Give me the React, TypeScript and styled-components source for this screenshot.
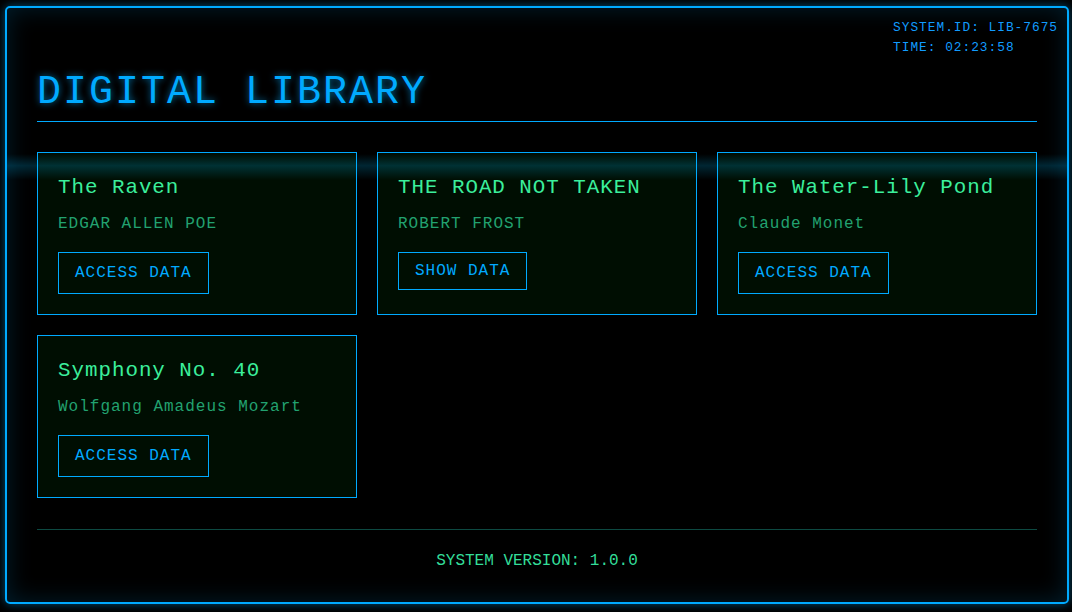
import React from "react";
import styled, { createGlobalStyle } from "styled-components";

const MONO = `"Liberation Mono", "Courier New", monospace`;

const GlobalStyle = createGlobalStyle`
  html, body {
    margin: 0;
    padding: 0;
    background: #000;
  }
  body {
    font-family: ${MONO};
    color: #00aaff;
  }
  * { box-sizing: border-box; }
`;

const Page = styled.div`
  padding: 6px 3px 8px 5px;
  height: 612px;
`;

const Frame = styled.div`
  position: relative;
  height: 598px;
  border: 2px solid #00aaff;
  border-radius: 5px;
  padding: 30px;
  overflow: hidden;
  box-shadow: 0 0 10px rgba(0, 170, 255, 0.45),
    inset 0 0 24px rgba(0, 170, 255, 0.18);
`;

const ScanLine = styled.div`
  position: absolute;
  left: 0;
  right: 0;
  top: 146px;
  height: 26px;
  pointer-events: none;
  z-index: 2;
  background: linear-gradient(
    to bottom,
    rgba(0, 170, 255, 0) 0%,
    rgba(0, 190, 255, 0.2) 45%,
    rgba(0, 170, 255, 0) 100%
  );
`;

const Status = styled.div`
  position: absolute;
  top: 10px;
  right: 9px;
  font-size: 12.8px;
  letter-spacing: 1px;
  line-height: 20px;
  color: #119cff;
`;

const Header = styled.header`
  border-bottom: 1px solid #00aaff;
  padding-bottom: 6px;
  margin-bottom: 30px;
`;

const Title = styled.h1`
  margin: 32px 0 0;
  font-size: 40px;
  font-weight: normal;
  letter-spacing: 2px;
  line-height: normal;
  color: #00aaff;
  text-shadow: 0 0 7px rgba(0, 170, 255, 0.65);
`;

const Grid = styled.div`
  display: grid;
  grid-template-columns: repeat(3, 1fr);
  gap: 20px;
`;

const Card = styled.div`
  border: 1px solid #00aaff;
  background: #000e02;
  padding: 20px 20px 19px;
  min-height: 163px;
`;

const CardTitle = styled.h3`
  margin: 3px 0 16px;
  font-size: 20.8px;
  font-weight: normal;
  letter-spacing: 1px;
  line-height: normal;
  color: #3bef9c;
`;

const Author = styled.p`
  margin: 0 0 19px;
  font-size: 16px;
  letter-spacing: 1px;
  line-height: normal;
  color: #22a270;
`;

const DataButton = styled.button<{ $compact?: boolean }>`
  display: inline-block;
  background: transparent;
  border: 1px solid #00aaff;
  color: #00aaff;
  font-family: ${MONO};
  font-size: 16px;
  letter-spacing: 1px;
  line-height: 20px;
  padding: ${(p) => (p.$compact ? "8px 16px" : "10px 16px")};
  cursor: pointer;
`;

const Footer = styled.footer`
  margin-top: 31px;
  border-top: 1px solid #0d4a42;
  padding-top: 22px;
  text-align: center;
  font-size: 16px;
  line-height: normal;
  color: #33dd99;
`;

type Item = { title: string; author: string; action: string; compact?: boolean };

const items: Item[] = [
  { title: "The Raven", author: "EDGAR ALLEN POE", action: "ACCESS DATA" },
  { title: "THE ROAD NOT TAKEN", author: "ROBERT FROST", action: "SHOW DATA", compact: true },
  { title: "The Water-Lily Pond", author: "Claude Monet", action: "ACCESS DATA" },
  { title: "Symphony No. 40", author: "Wolfgang Amadeus Mozart", action: "ACCESS DATA" },
];

export default function App() {
  return (
    <>
      <GlobalStyle />
      <Page>
        <Frame>
          <ScanLine />
          <Status>
            <div>SYSTEM.ID: LIB-7675</div>
            <div>TIME: 02:23:58</div>
          </Status>
          <Header>
            <Title>DIGITAL LIBRARY</Title>
          </Header>
          <Grid>
            {items.map((it) => (
              <Card key={it.title}>
                <CardTitle>{it.title}</CardTitle>
                <Author>{it.author}</Author>
                <DataButton $compact={it.compact}>{it.action}</DataButton>
              </Card>
            ))}
          </Grid>
          <Footer>SYSTEM VERSION: 1.0.0</Footer>
        </Frame>
      </Page>
    </>
  );
}
